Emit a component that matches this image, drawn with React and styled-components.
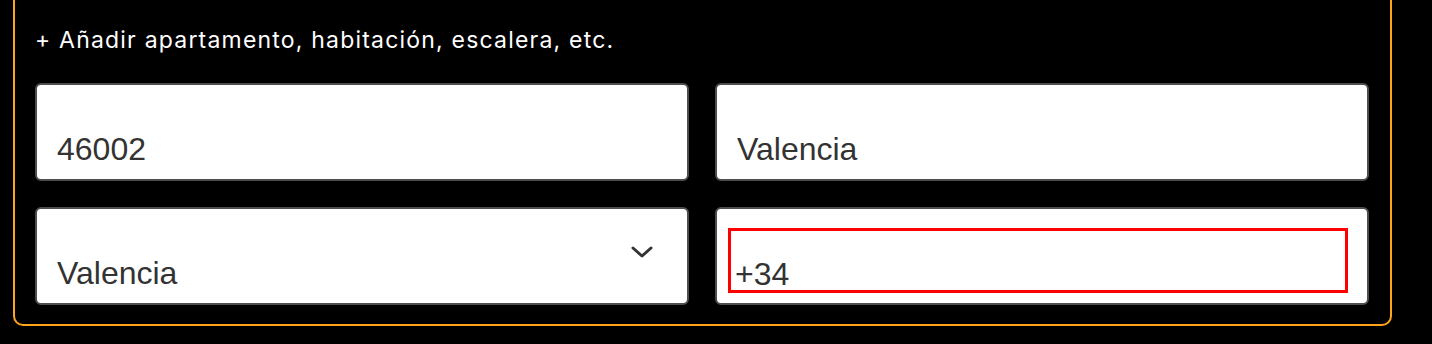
import React from "react";
import styled, { createGlobalStyle } from "styled-components";

const GlobalStyle = createGlobalStyle`
html, body {
    margin: 0;
    padding: 0;
    background: #000;
    overflow: hidden;
}
`;

function Chevron() {
    return (
        <svg width="22" height="12" viewBox="0 0 22 12" fill="none">
            <polyline points="2,2 11,10 20,2" stroke="#333" strokeWidth="3" strokeLinecap="round" strokeLinejoin="round" />
        </svg>
    );
}

function App() {
    return (
        <>
            <GlobalStyle />
            <Card>
                <AddLink>+ Añadir apartamento, habitación, escalera, etc.</AddLink>
                <FieldGrid>
                    <Field>
                        <Value>46002</Value>
                    </Field>
                    <Field>
                        <Value>Valencia</Value>
                    </Field>
                    <Field select>
                        <Value>Valencia</Value>
                        <Arrow>
                            <Chevron />
                        </Arrow>
                    </Field>
                    <Field phone>
                        <PhoneInput>
                            <Value>+34</Value>
                        </PhoneInput>
                    </Field>
                </FieldGrid>
            </Card>
        </>
    );
}

export default App;

const Card = styled.div`
box-sizing: border-box;
width: 1379px;
margin-left: 13px;
border: 2px solid #ffa41b;
border-top: none;
border-radius: 0 0 10px 10px;
padding: 28px 20px 19px 20px;
`;

const AddLink = styled.div`
font-family: Inter, "Liberation Sans", sans-serif;
font-size: 23px;
letter-spacing: 1.2px;
line-height: 24px;
color: #fff;
margin-bottom: 31px;
`;

const FieldGrid = styled.div`
display: grid;
grid-template-columns: 654px 654px;
grid-auto-rows: 98px;
column-gap: 26px;
row-gap: 26px;
`;

const Field = styled.div`
box-sizing: border-box;
background: #fff;
border: 2px solid #4d4d4d;
border-radius: 6px;
display: flex;
align-items: flex-end;
justify-content: space-between;
padding: ${props => (props.phone ? "19px 19px 10px 11px" : "0 34px 12px 20px")};
`;

const Value = styled.span`
font-family: "Liberation Sans", Arial, sans-serif;
font-size: 32px;
line-height: 36px;
color: #333;
`;

const Arrow = styled.span`
align-self: center;
display: flex;
margin-top: 4px;
`;

const PhoneInput = styled.div`
flex: 1;
height: 100%;
box-sizing: border-box;
border: 3px solid #ff0000;
display: flex;
align-items: flex-end;
padding-left: 4px;
${Value} {
    line-height: 31px;
}
`;
